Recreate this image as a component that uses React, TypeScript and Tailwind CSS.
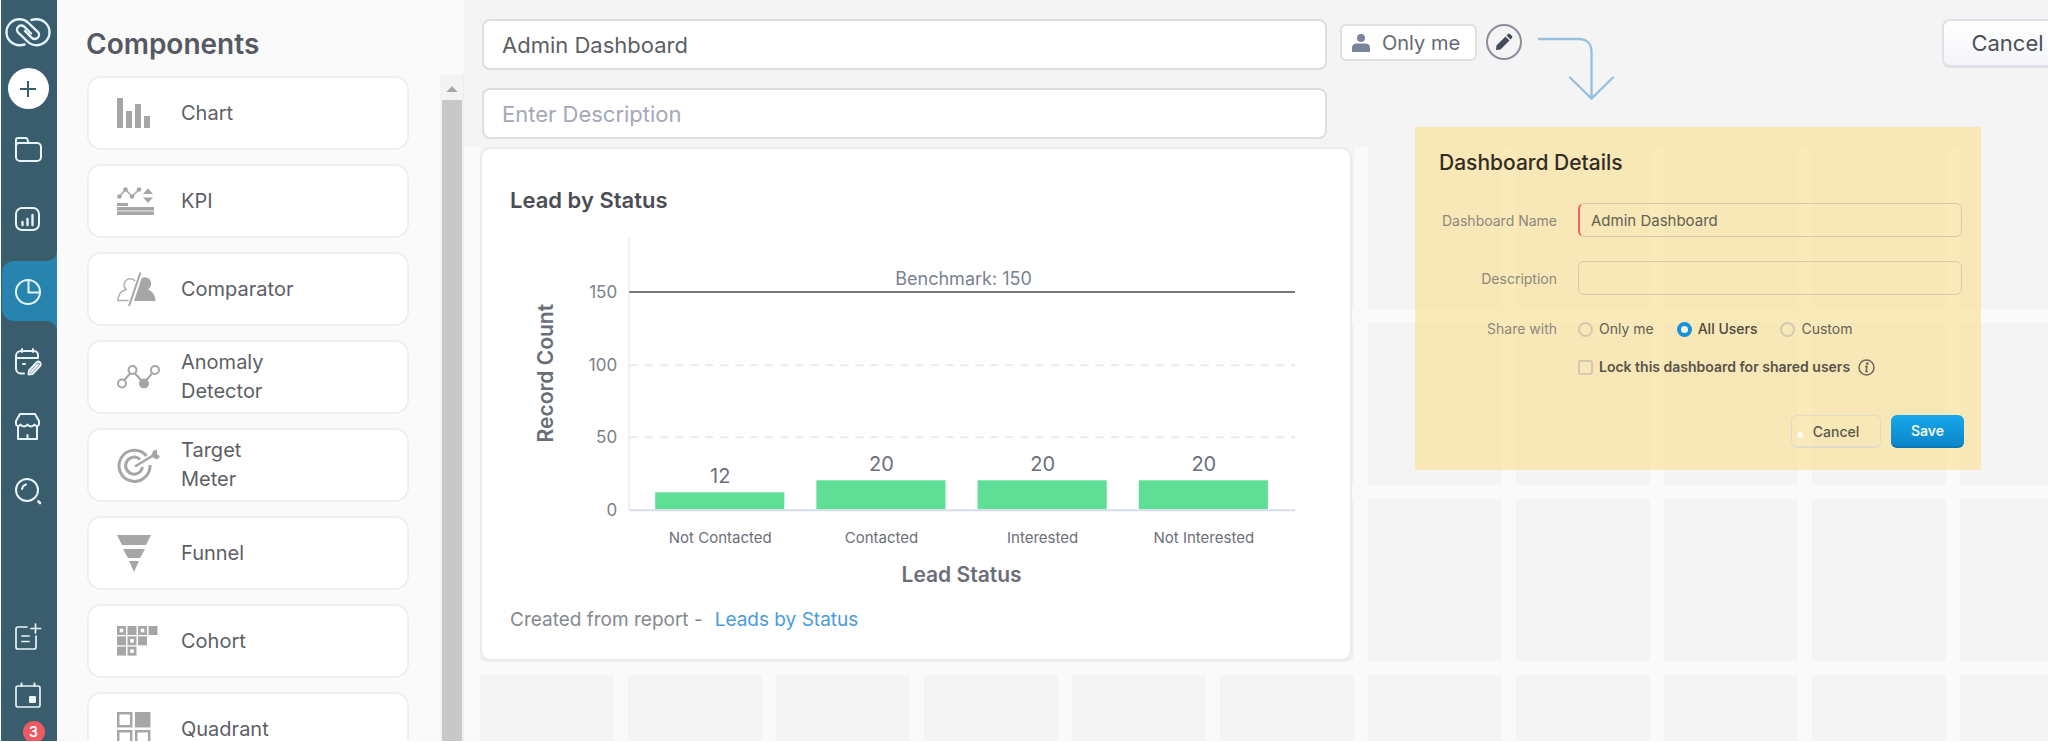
import React from 'react';

const axisTicks = [
  { value: 150, y: 62 },
  { value: 100, y: 135 },
  { value: 50, y: 207 },
  { value: 0, y: 280 },
];

const leadStatuses = [
  { label: 'Not Contacted', count: 12 },
  { label: 'Contacted', count: 20 },
  { label: 'Interested', count: 20 },
  { label: 'Not Interested', count: 20 },
];

const ChartIcon = () => (
  <svg width="34" height="30" viewBox="0 0 34 30" fill="#a6a6a6">
    <rect x="0" y="0" width="6" height="30" />
    <rect x="9" y="13" width="6" height="17" />
    <rect x="18" y="6" width="6" height="24" />
    <rect x="27" y="18" width="6" height="12" />
  </svg>
);

const KpiIcon = () => (
  <svg width="38" height="28" viewBox="0 0 38 28" fill="#a6a6a6">
    <path d="M2.5 9.5 8.5 2.5 15 9.5 22 2.5" fill="none" stroke="#a6a6a6" strokeWidth="1.5" />
    <circle cx="2.5" cy="9.5" r="2.3" />
    <circle cx="8.5" cy="2.5" r="2.3" />
    <circle cx="15" cy="9.5" r="2.3" />
    <circle cx="22" cy="2.5" r="2.3" />
    <path d="M31 1.5 36 7H26ZM31 16 26 10.500H36Z" />
    <rect x="0" y="16" width="11" height="3" />
    <rect x="0" y="20" width="37" height="8" fill="#c9c9c9" />
    <rect x="0" y="20" width="37" height="3" />
    <rect x="0" y="25" width="37" height="3" />
  </svg>
);

const ComparatorIcon = () => (
  <svg width="39" height="34" viewBox="0 0 39 34" fill="none" stroke="#b0b0b0" strokeWidth="1.6">
    <path d="M18 9A6.200 6.200 0 1 0 9 17.500C4.500 19 1 22.500 1 28.500H11.500" />
    <path d="M23.500 .5 12 34" stroke="#a6a6a6" strokeWidth="2" />
    <path
      d="M24.500 6.200A6.500 6.500 0 0 1 31 17.500C35 19 38.500 23 38.500 29H17L22 14Z"
      fill="#a6a6a6"
      stroke="none"
    />
  </svg>
);

const AnomalyIcon = () => (
  <svg width="43" height="24" viewBox="0 0 43 24" fill="none" stroke="#a6a6a6" strokeWidth="2">
    <path d="M7.500 15 13 8.500M18 8.500 25 16M29.500 15 35 8.500" />
    <circle cx="5" cy="18.500" r="4" />
    <circle cx="15.500" cy="5" r="4" />
    <circle cx="27" cy="18.500" r="4" fill="#a6a6a6" />
    <circle cx="38" cy="5" r="4" />
  </svg>
);

const TargetIcon = () => (
  <svg width="43" height="35" viewBox="0 0 43 35" fill="none" stroke="#a6a6a6" strokeWidth="3">
    <path d="M29.500 8A15.500 15.500 0 1 0 33 17" />
    <path d="M23 11.500A8.500 8.500 0 1 0 25.500 19" />
    <path d="M18 18.500 36 7.500" strokeWidth="2.600" />
    <path d="M34 8.500 36 3 40 1.500V6L43 8.500 40 11.500Z" fill="#a6a6a6" stroke="none" />
  </svg>
);

const FunnelIcon = () => (
  <svg width="34" height="37" viewBox="0 0 34 37" fill="#a6a6a6">
    <path d="M0 0H34L29 10H5ZM6 14H28L23 23H11ZM12 26H22L17 37Z" />
  </svg>
);

const CohortIcon = () => {
  const rows = ['ofof', 'fof', 'fo'];
  return (
    <svg width="41" height="30" viewBox="0 0 41 30">
      {rows.map((row, r) =>
        row.split('').map((cell, c) => (
          <g key={`${r}-${c}`}>
            <rect x={c * 10.5} y={r * 10.3} width="9" height="9" fill="#a6a6a6" />
            {cell === 'o' && <rect x={c * 10.5 + 2.7} y={r * 10.3 + 2.7} width="3.600" height="3.600" fill="#fff" />}
          </g>
        ))
      )}
    </svg>
  );
};

const QuadrantIcon = () => (
  <svg width="34" height="34" viewBox="0 0 34 34" fill="none" stroke="#a6a6a6" strokeWidth="2.500">
    <rect x="1.200" y="1.200" width="13" height="13" />
    <rect x="19.200" y="1.200" width="13" height="13" fill="#a6a6a6" />
    <rect x="1.200" y="19.200" width="13" height="13" />
    <rect x="19.200" y="19.200" width="13" height="13" />
  </svg>
);

const components = [
  { name: 'Chart', Icon: ChartIcon },
  { name: 'KPI', Icon: KpiIcon },
  { name: 'Comparator', Icon: ComparatorIcon },
  { name: 'Anomaly Detector', Icon: AnomalyIcon },
  { name: 'Target Meter', Icon: TargetIcon },
  { name: 'Funnel', Icon: FunnelIcon },
  { name: 'Cohort', Icon: CohortIcon },
  { name: 'Quadrant', Icon: QuadrantIcon },
];

interface RailButtonProps {
  label: string;
  className: string;
  children: React.ReactNode;
}

const RailButton: React.FC<RailButtonProps> = ({ label, className, children }) => (
  <button type="button" aria-label={label} className={`shrink-0 ${className}`}>
    <svg width="28" height="28" viewBox="0 0 28 28" fill="none" stroke="#e6f4fa" strokeWidth="2" strokeLinecap="round" strokeLinejoin="round">
      {children}
    </svg>
  </button>
);

const Rail = () => (
  <nav aria-label="Main" className="flex w-14 shrink-0 flex-col items-center overflow-hidden bg-[#3a5d6e] pt-4 pr-[2px]">
    <svg className="shrink-0" width="46" height="32" viewBox="1 0 46 32" fill="none" stroke="#e6f4fa" strokeWidth="2.400" strokeLinecap="round">
      <path d="M20.500 28.500C18.500 29.200 17 29.200 15.500 29.200A13 13 0 0 1 15.500 3.200C19 3.200 22 4.500 24.500 7L33.500 15.500A4.200 4.200 0 0 1 28 22L21 15" />
      <path d="M27.500 3.900C29.500 3.200 31 3.200 32.500 3.200A13 13 0 0 1 32.500 29.200C29 29.200 26 28 23.500 25.500L14.500 17A4.200 4.200 0 0 1 20 10.500L27 17.500" />
    </svg>

    <button type="button" aria-label="Create" className="mt-5 flex h-[41px] w-[41px] shrink-0 items-center justify-center rounded-full bg-white">
      <svg width="18" height="18" viewBox="0 0 18 18" stroke="#3a5d6e" strokeWidth="2">
        <path d="M9 1V17M1 9H17" />
      </svg>
    </button>

    <RailButton label="Folders" className="mt-[27px]">
      <path d="M2 11V4a2 2 0 0 1 2-2h7.500a2 2 0 0 1 2 1.500L14.500 7H23a4 4 0 0 1 4 4v10a4 4 0 0 1-4 4H6a4 4 0 0 1-4-4V10a3 3 0 0 1 3-3h9.500" />
    </RailButton>

    <RailButton label="Reports" className="mt-[41px]">
      <rect x="2" y="3" width="23" height="22" rx="6" />
      <path d="M8.500 20V17M13.500 20V14M18.500 20V10" strokeWidth="2.400" />
    </RailButton>

    <button type="button" aria-label="Dashboards" className="mt-[17px] shrink-0 self-start">
      <svg width="56" height="82" viewBox="0 0 56 82" fill="none">
        <path d="M56 0C56 7 52 11 44 11H14C6 11 1 16 1 24V58C1 66 6 71 14 71H44C52 71 56 75 56 82Z" fill="#2684ae" />
        <g stroke="#e6f4fa" strokeWidth="2" strokeLinejoin="round">
          <circle cx="27" cy="42" r="12" />
          <path d="M27.500 30V42.500H39" />
        </g>
      </svg>
    </button>

    <RailButton label="Planner" className="mt-4">
      <path d="M10 25.500H7a5 5 0 0 1-5-5V8a5 5 0 0 1 5-5h13a4 4 0 0 1 4 4v3H3M8 1V4M19 1V4M9 16H11" />
      <path d="M14.500 26.500 15 22.500 22.500 14.500a2.200 2.200 0 0 1 3.500 3.500L18.500 26ZM17 24 24 16.500" />
    </RailButton>

    <RailButton label="Marketplace" className="mt-9">
      <path d="M6 2H21L25 9V12C25 14 22 15 20.500 12.500 19 15 15 15 13.500 12.500 12 15 8 15 6.500 12.500 5 15 2 14 2 12V9ZM4 15V27H23V15M13.500 27V23" />
    </RailButton>

    <RailButton label="Search" className="mt-[37px]">
      <circle cx="13" cy="13" r="11" />
      <path d="M8 12A5.500 5.500 0 0 1 12 7.500" />
      <path d="M24.500 24.500 26 26" strokeWidth="2.600" />
    </RailButton>

    <RailButton label="New note" className="mt-[117px]">
      <path d="M13 5H4a2 2 0 0 0-2 2V25a2 2 0 0 0 2 2H20a2 2 0 0 0 2-2V14M8 14H15M8 19.500H15M21.500 2V11M17 6.500H26.500" strokeWidth="1.700" />
    </RailButton>

    <RailButton label="Calendar" className="mt-8">
      <rect x="2" y="4" width="24" height="21" rx="2" strokeWidth="1.700" />
      <path d="M7.500 1.500V4M20.500 1.500V4" />
      <rect x="16" y="15" width="5" height="5" fill="#fff" />
    </RailButton>

    <span className="mt-[11px] ml-[11px] flex h-[22px] w-[22px] shrink-0 items-center justify-center rounded-full bg-[#ee5a63] text-[14px] leading-4 font-semibold text-white">
      3
    </span>
  </nav>
);

const ComponentsPanel = () => (
  <aside className="flex w-[407px] shrink-0 flex-col bg-[#fafafa]">
    <h1 className="pt-6 pl-[29px] text-[28px] leading-[40px] font-semibold text-[#565963]">Components</h1>
    <div className="mt-[11px] flex min-h-0 flex-1">
      <ul className="flex min-w-0 flex-1 flex-col gap-[14px] overflow-hidden pt-px pr-[31px] pl-[30px]">
        {components.map(({ name, Icon }) => (
          <li key={name} className="shrink-0">
            <button
              type="button"
              className="flex h-[74px] w-full items-center rounded-[14px] border-2 border-[#efefef] bg-white pl-7 text-left"
            >
              <span className="w-16 shrink-0">
                <Icon />
              </span>
              <span className="w-[118px] text-[20px] leading-[29px] text-[#5c5f66]">{name}</span>
            </button>
          </li>
        ))}
      </ul>
      <div className="flex w-6 flex-col items-center border-r border-[#ececec] bg-[#f3f3f3]">
        <svg width="20" height="25" viewBox="0 0 20 25" className="shrink-0">
          <path d="M4.500 17 10 11 15.500 17Z" fill="#a8a8a8" />
        </svg>
        <div className="w-5 flex-1 bg-[#c8c8c8]" />
      </div>
    </div>
  </aside>
);

const Header = () => (
  <header className="flex items-start bg-[#f4f4f4] pt-[19px] pl-[18px]">
    <div className="flex max-w-[845px] flex-1 flex-col gap-[18px]">
      <input
        type="text"
        aria-label="Dashboard name"
        defaultValue="Admin Dashboard"
        className="h-[51px] w-full rounded-lg border-2 border-[#dedede] bg-white px-[18px] text-[22px] text-[#5c5f66] outline-none"
      />
      <input
        type="text"
        aria-label="Dashboard description"
        placeholder="Enter Description"
        className="h-[51px] w-full rounded-lg border-2 border-[#dedede] bg-white px-[18px] text-[22px] text-[#5c5f66] outline-none placeholder:text-[#a5a8b8]"
      />
    </div>

    <button
      type="button"
      className="mt-[5px] ml-[13px] flex h-[37px] w-[137px] shrink-0 items-center gap-3 rounded-md border-2 border-[#e0e0e0] bg-white pl-[10px] text-[20px] text-[#666a73]"
    >
      <svg width="18" height="18" viewBox="0 0 18 18" fill="#7b849b" className="shrink-0">
        <circle cx="9" cy="4" r="4" />
        <path d="M0 18V14Q0 9.500 4.500 9.500H13.500Q18 9.500 18 14V18Z" />
      </svg>
      <span className="whitespace-nowrap">Only me</span>
    </button>

    <button
      type="button"
      aria-label="Edit details"
      className="mt-[5px] ml-[9px] flex h-9 w-9 shrink-0 items-center justify-center rounded-full border-2 border-[#8b8f9b]"
    >
      <svg width="18" height="18" viewBox="0 0 18 18" fill="#454a5b">
        <path d="M1 17 1.500 12.500 10.500 3.500 14.500 7.500 5.500 16.500Z" />
        <path d="M11.500 2.500 13 1a1.500 1.500 0 0 1 2 0L17 3a1.500 1.500 0 0 1 0 2L15.500 6.500Z" />
      </svg>
    </button>

    <svg className="mt-[18px] ml-[15px] shrink-0" width="78" height="64" viewBox="0 0 78 64" fill="none" stroke="#98c1e0" strokeWidth="2.400" strokeLinecap="round">
      <path d="M2 2H42C50 2 54.500 7 54.500 15V61M33 40.500 54.500 61.500 76 40.500" />
    </svg>

    <button
      type="button"
      className="-mr-[25px] ml-auto h-[49px] w-[131px] shrink-0 rounded-lg border-2 border-b-[3px] border-[#dfe1e9] bg-linear-to-b from-white to-[#f4f5f9] text-[22px] text-[#4d5057]"
    >
      Cancel
    </button>
  </header>
);

const LeadChart = () => (
  <svg viewBox="2 0 867 366" className="w-full font-[Inter,'Liberation_Sans',sans-serif]" role="img" aria-label="Lead by Status">
    <path d="M149 8V280" stroke="#f0f0f0" strokeWidth="2" />
    {axisTicks.map((tick) => (
      <text key={tick.value} x="137" y={tick.y + 6} textAnchor="end" fontSize="17" fill="#7c7f88">
        {tick.value}
      </text>
    ))}
    <path d="M150 135H814M150 207H814" stroke="#ebebeb" strokeWidth="2" strokeDasharray="8 7" />
    <path d="M149 62H814" stroke="#757779" strokeWidth="2" />
    <text x="483" y="55" textAnchor="middle" fontSize="18" fill="#7b8292">
      Benchmark: 150
    </text>
    {leadStatuses.map((status, i) => {
      const x = 175 + i * 161;
      const height = Math.round(status.count * 1.44);
      return (
        <g key={status.label}>
          <rect x={x} y={279 - height} width="129" height={height} fill="#5fdf96" />
          <text x={x + 65} y={270 - height} textAnchor="middle" fontSize="20" fill="#6c6f7a">
            {status.count}
          </text>
          <text x={x + 65} y="313" textAnchor="middle" fontSize="15" fill="#6c6f7a">
            {status.label}
          </text>
        </g>
      );
    })}
    <path d="M149 280H814" stroke="#d7dcea" strokeWidth="2" />
    <text x="481" y="352" textAnchor="middle" fontSize="21" fontWeight="600" fill="#6b6e77">
      Lead Status
    </text>
    <text transform="translate(73 143) rotate(-90)" textAnchor="middle" fontSize="21" fontWeight="600" fill="#6b6e77">
      Record Count
    </text>
  </svg>
);

// One canvas cell is 134x162 with 14px gutters, the card covers six by three of them
const Canvas = () => (
  <div className="min-h-0 flex-1 bg-[#fafafa] pl-4">
    <div className="h-full bg-[#f4f4f4] bg-[linear-gradient(to_right,transparent_134px,#fafafa_134px),linear-gradient(to_bottom,transparent_162px,#fafafa_162px)] bg-size-[148px_176px]">
      <section className="w-full max-w-[872px] rounded-[10px] border-2 border-[#ebebeb] bg-white pt-[31px] pb-5 shadow-xs">
        <h2 className="pl-7 text-[22px] leading-[40px] font-semibold text-[#4a4d54]">Lead by Status</h2>
        <div className="mt-[10px]">
          <LeadChart />
        </div>
        <p className="mt-[5px] flex gap-3 pl-7 text-[19px] leading-[38px] text-[#868990]">
          Created from report -
          <a href="#leads-by-status" className="text-[#4a9be0]">
            Leads by Status
          </a>
        </p>
      </section>
    </div>
  </div>
);

interface ShareOptionProps {
  label: string;
  checked?: boolean;
}

const ShareOption: React.FC<ShareOptionProps> = ({ label, checked }) => (
  <label className={`flex items-center gap-[6px] ${checked ? 'font-medium text-[#4d4a40]' : 'text-[#625f54]'}`}>
    <input
      type="radio"
      name="share"
      defaultChecked={checked}
      className="h-[15px] w-[15px] appearance-none rounded-full border-2 border-[#d2c9b0] checked:border-4 checked:border-[#1492dc] checked:bg-[#fdf6e0]"
    />
    {label}
  </label>
);

const DetailsDialog = () => (
  <form className="absolute top-[127px] right-[67px] w-[566px] bg-[rgba(250,225,157,0.7)] px-6 pt-[21px] pb-[22px] text-[14px]">
    <h2 className="text-[21px] leading-[30px] font-medium text-[#322d22]">Dashboard Details</h2>
    <div className="mt-[25px] mr-[-5px] grid grid-cols-[118px_1fr] items-center gap-x-[21px]">
      <label htmlFor="details-name" className="text-right whitespace-nowrap text-[#8c887d]">
        Dashboard Name
      </label>
      <input
        id="details-name"
        type="text"
        defaultValue="Admin Dashboard"
        className="h-[34px] w-full rounded-md border border-l-2 border-[#d6ccae] border-l-[#f0605c] px-[11px] text-[15px] text-[#625f54] outline-none"
      />
      <label htmlFor="details-description" className="mt-6 text-right text-[#8c887d]">
        Description
      </label>
      <input
        id="details-description"
        type="text"
        className="mt-6 h-[34px] w-full rounded-md border border-[#d6ccae] px-[11px] text-[15px] text-[#625f54] outline-none"
      />
      <span className="mt-6 text-right leading-5 text-[#8c887d]">Share with</span>
      <div className="mt-6 flex gap-[23px] leading-5">
        <ShareOption label="Only me" />
        <ShareOption label="All Users" checked />
        <ShareOption label="Custom" />
      </div>
      <div className="col-start-2 mt-[18px] flex items-center gap-2 leading-5">
        <label className="flex items-center gap-[6px] font-semibold text-[#57544a]">
          <input type="checkbox" className="h-[15px] w-[15px] appearance-none rounded-[3px] border-2 border-[#d2c9b0]" />
          Lock this dashboard for shared users
        </label>
        <svg width="17" height="17" viewBox="0 0 17 17" fill="none" stroke="#6b685e" strokeWidth="1.500">
          <circle cx="8.500" cy="8.500" r="7.500" />
          <path d="M7 7.500H9L8 12.500H10" />
          <circle cx="9.200" cy="4.700" r=".6" fill="#6b685e" />
        </svg>
      </div>
    </div>
    <div className="mt-[38px] mr-[-7px] flex justify-end gap-[10px]">
      <button
        type="button"
        className="relative flex h-[33px] w-[90px] items-center justify-center rounded-md border border-b-2 border-[#e4dccb] font-medium text-[#5a574d]"
      >
        <span className="absolute bottom-2 left-[5px] h-[6px] w-[6px] rounded-full bg-white/80" />
        Cancel
      </button>
      <button
        type="submit"
        className="h-[33px] w-[73px] rounded-md border-b-2 border-[#0a78b4] bg-linear-to-b from-[#18a8ec] to-[#0a86c8] font-semibold text-[#eef6e8]"
      >
        Save
      </button>
    </div>
  </form>
);

const App = () => (
  <div className="flex h-screen overflow-hidden bg-white pb-px pl-px font-[Inter,'Liberation_Sans',sans-serif]">
    <Rail />
    <ComponentsPanel />
    <main className="relative flex min-w-0 flex-1 flex-col overflow-hidden">
      <Header />
      <div className="h-2 shrink-0 bg-[#f4f4f4]" />
      <Canvas />
      <DetailsDialog />
    </main>
  </div>
);

export default App;
